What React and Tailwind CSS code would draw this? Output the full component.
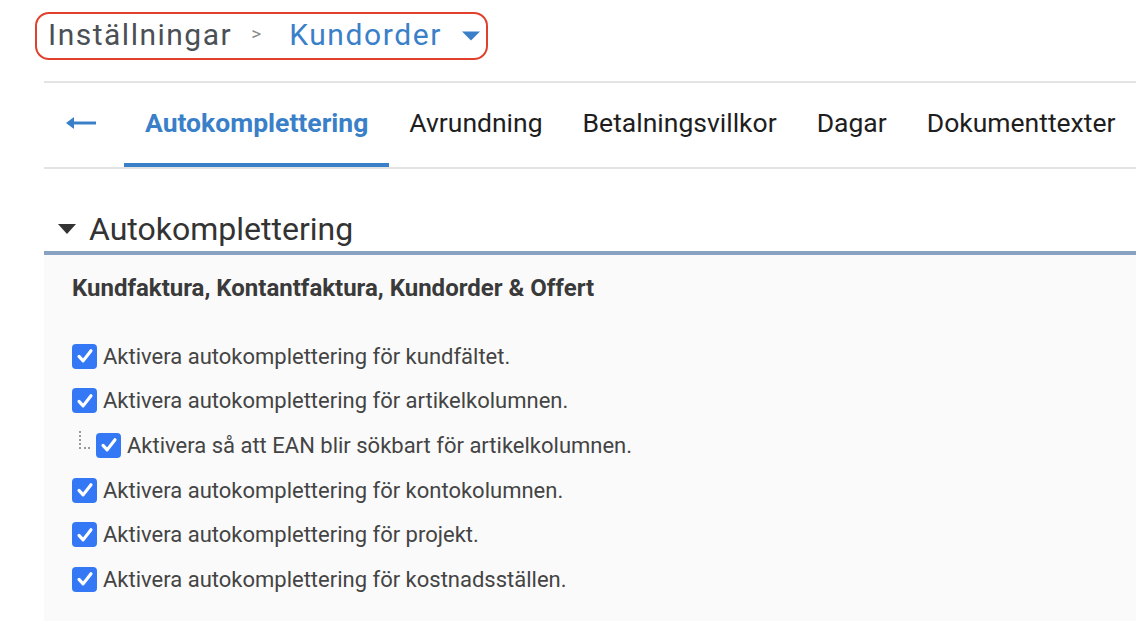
import React from 'react'

const tabs = ['Avrundning', 'Betalningsvillkor', 'Dagar', 'Dokumenttexter']

const options = [
    { label: 'Aktivera autokomplettering för kundfältet.' },
    { label: 'Aktivera autokomplettering för artikelkolumnen.' },
    { label: 'Aktivera så att EAN blir sökbart för artikelkolumnen.', child: true },
    { label: 'Aktivera autokomplettering för kontokolumnen.' },
    { label: 'Aktivera autokomplettering för projekt.' },
    { label: 'Aktivera autokomplettering för kostnadsställen.' },
]

function Check() {
    return (
        <span className="flex h-[25px] w-[25px] shrink-0 items-center justify-center rounded-[4px] bg-[#3478f6]">
            <svg width="18" height="18" viewBox="0 0 24 24" fill="none">
                <path d="M4 12.5l5.5 6L20 5" stroke="white" strokeWidth="4.2" strokeLinecap="round" strokeLinejoin="round" />
            </svg>
        </span>
    )
}

function Option({ label, child }) {
    return (
        <div className="flex h-[44.6px] items-center">
            {child && (
                <span className="ml-[7px] mr-[6px] mb-[10px] h-[18px] w-[11px] border-b-2 border-l-2 border-dotted border-[#9a9a9a]"></span>
            )}
            <Check />
            <span className="ml-[6px] text-[22px] text-[#444]">{label}</span>
        </div>
    )
}

export default function App() {
    return (
        <div className="min-h-[644px] w-[1136px] overflow-hidden bg-white font-['Roboto',sans-serif]">
            <div className="pl-[35px] pt-[12px]">
                <div className="inline-flex h-[48px] items-center rounded-[14px] border-2 border-[#e0402c] pb-[4px] pl-[11px] pr-[6px]">
                    <span className="text-[30px] tracking-[1.5px] text-[#4b4f56]">Inställningar</span>
                    <span className="ml-[19px] mr-[28px] text-[19px] text-[#8a8a8a]">&gt;</span>
                    <span className="text-[30px] tracking-[1.6px] text-[#3a80c9]">Kundorder</span>
                    <svg className="ml-[20px] mt-[4px]" width="18" height="10" viewBox="0 0 18 10">
                        <path d="M0 0.5h18L9 9.5z" fill="#3a80c9" />
                    </svg>
                </div>
            </div>

            <div className="ml-[44px] mt-[21px] border-t-2 border-b-2 border-[#e3e3e3]">
                <div className="flex h-[84px] items-stretch">
                    <div className="flex w-[80px] items-center pb-[4px] pl-[22px]">
                        <svg width="30" height="14" viewBox="0 0 30 14">
                            <path d="M2 7h28" stroke="#3a80c9" strokeWidth="3" />
                            <path d="M0 7l8-6v12z" fill="#3a80c9" />
                        </svg>
                    </div>
                    <div className="flex items-center border-b-[4px] border-[#3a80c9] px-[21px]">
                        <span className="text-[26.5px] font-bold text-[#3a80c9]">Autokomplettering</span>
                    </div>
                    {tabs.map((t) => (
                        <div key={t} className="flex items-center px-[20px] pb-[4px]">
                            <span className="text-[26.5px] text-[#1e1e1e]">{t}</span>
                        </div>
                    ))}
                </div>
            </div>

            <div className="ml-[44px] mt-[40px]">
                <div className="flex h-[46px] items-center border-b-[4px] border-[#8aa2c2] pb-[3px]">
                    <svg className="ml-[14px]" width="18" height="10" viewBox="0 0 18 10">
                        <path d="M0 0h18L9 10z" fill="#333" />
                    </svg>
                    <span className="ml-[13px] text-[32px] text-[#333]">Autokomplettering</span>
                </div>
                <div className="h-[366px] bg-[#fafafa] pl-[28px] pt-[15px]">
                    <div className="text-[24px] font-bold text-[#3a3a3a]">Kundfaktura, Kontantfaktura, Kundorder &amp; Offert</div>
                    <div className="mt-[28px]">
                        {options.map((o) => (
                            <Option key={o.label} {...o} />
                        ))}
                    </div>
                </div>
            </div>
        </div>
    )
}
